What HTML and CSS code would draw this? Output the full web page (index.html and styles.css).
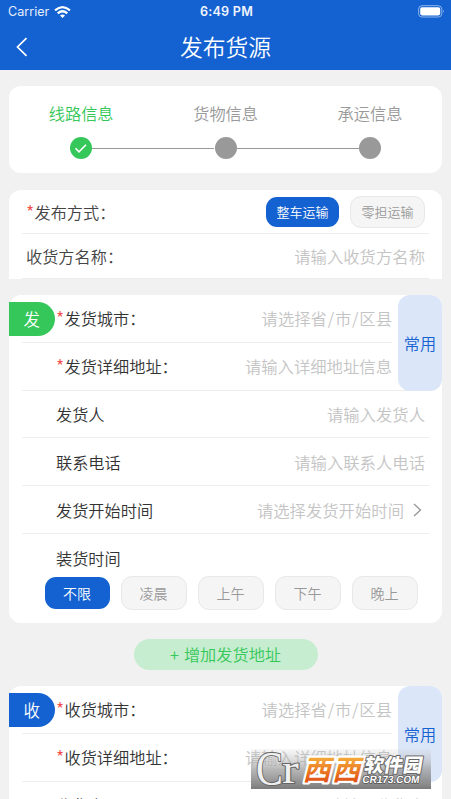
FILE: index.html
```html
<!DOCTYPE html>
<html lang="zh-CN">
<head>
<meta charset="utf-8">
<title>发布货源</title>
<link rel="stylesheet" href="styles.css">
</head>
<body>
<header class="header">
  <div class="status">
    <div class="carrier">Carrier
      <svg width="17" height="12" viewBox="0 0 17 12" fill="none" stroke="#fff" stroke-width="2.2"><path d="M1 4.4Q8.5-2.1 16 4.4M3.7 7.3Q8.5 3.2 13.3 7.3"/><path d="M6 9.4Q8.5 7.4 11 9.4L8.5 12Z" fill="#fff" stroke="none"/></svg>
    </div>
    <div class="time">6:49 PM</div>
    <svg class="battery" width="27" height="13" viewBox="0 0 27 13"><rect x=".6" y=".7" width="23.2" height="11.3" rx="3.4" fill="none" stroke="#8eb4ea" stroke-width="1"/><rect x="2.2" y="2.3" width="20" height="8.1" rx="1.8" fill="#fff"/><path d="M25 4.6Q26.6 6.4 25 8.2Z" fill="#8eb4ea"/></svg>
  </div>
  <div class="titlebar">
    <svg class="back" width="12" height="20" viewBox="0 0 12 20" fill="none" stroke="#fff" stroke-width="1.7"><path d="M10.5 1.2 1.5 10l9 8.8"/></svg>
    <h1>发布货源</h1>
  </div>
</header>

<main>
  <section class="card steps">
    <div class="step done"><span>线路信息</span><i class="dot"><svg width="14" height="11" viewBox="0 0 14 11" fill="none" stroke="#fff" stroke-width="1.6"><path d="M1.5 5.3 5 8.9l7-7.1"/></svg></i></div>
    <div class="step"><span>货物信息</span><i class="dot"></i></div>
    <div class="step"><span>承运信息</span><i class="dot"></i></div>
  </section>

  <section class="card basic">
    <div class="row"><label><b>*</b>发布方式：</label><div class="modes"><button class="chip on">整车运输</button><button class="chip">零担运输</button></div></div>
    <div class="row"><label>收货方名称：</label><span class="hint">请输入收货方名称</span></div>
  </section>

  <section class="card address">
    <div class="tag send">发</div>
    <div class="common">常用</div>
    <div class="row short"><label><b>*</b>发货城市：</label><span class="hint">请选择省<i>/</i>市<i>/</i>区县</span></div>
    <div class="row inset"><label><b>*</b>发货详细地址：</label><span class="hint">请输入详细地址信息</span></div>
    <div class="row"><label>发货人</label><span class="hint">请输入发货人</span></div>
    <div class="row"><label>联系电话</label><span class="hint">请输入联系人电话</span></div>
    <div class="row"><label>发货开始时间</label><span class="hint">请选择发货开始时间<svg class="next" width="9" height="14" viewBox="0 0 9 14" fill="none" stroke="#999" stroke-width="1.4"><path d="m1 1 6.5 6L1 13"/></svg></span></div>
    <div class="row last"><label>装货时间</label></div>
    <div class="periods"><button class="chip on">不限</button><button class="chip">凌晨</button><button class="chip">上午</button><button class="chip">下午</button><button class="chip">晚上</button></div>
  </section>

  <button class="add">+ 增加发货地址</button>

  <section class="card address receive-card">
    <div class="tag receive">收</div>
    <div class="common">常用</div>
    <div class="row short"><label><b>*</b>收货城市：</label><span class="hint">请选择省<i>/</i>市<i>/</i>区县</span></div>
    <div class="row inset"><label><b>*</b>收货详细地址：</label><span class="hint">请输入详细地址信息</span></div>
    <div class="row"><label>收货人</label><span class="hint">请输入收货人</span></div>
  </section>
</main>

<svg class="watermark" width="180" height="40" viewBox="0 0 180 40">
  <defs>
    <linearGradient id="shade" x2="0" y2="1"><stop stop-color="#ccc" stop-opacity=".15"/><stop offset=".5" stop-color="#999" stop-opacity=".7"/><stop offset="1" stop-color="#777" stop-opacity=".97"/></linearGradient>
    <linearGradient id="orange" x2="0" y2="1"><stop offset=".2" stop-color="#f7b23c"/><stop offset=".9" stop-color="#df4a12"/></linearGradient>
  </defs>
  <rect width="180" height="40" fill="url(#shade)"/>
  <g class="mark-letters">
    <text transform="translate(5 36) scale(.84 1)" font-size="48">C</text>
    <text transform="translate(31 33.5) scale(1.2 1)" font-size="42">r</text>
  </g>
  <g class="mark-outline">
    <text transform="translate(51.5 31) skewX(-14)" font-size="28">西</text>
    <text transform="translate(81 31) skewX(-14)" font-size="28">西</text>
  </g>
  <g class="mark-name">
    <text transform="translate(51.5 31) skewX(-14)" font-size="28">西</text>
    <text transform="translate(81 31) skewX(-14)" font-size="28">西</text>
  </g>
  <text class="mark-site" transform="translate(112.5 22.5) skewX(-10)" font-size="19" textLength="58" lengthAdjust="spacingAndGlyphs">软件园</text>
  <text class="mark-url" transform="translate(111 33.5) skewX(-8)" font-size="10.5" textLength="57" lengthAdjust="spacingAndGlyphs">CR173.COM</text>
</svg>
</body>
</html>
```
FILE: styles.css
```css
* { box-sizing: border-box; }
html, body { margin: 0; height: 799px; overflow: hidden; }
body { position: relative; width: 451px; background: #f1f1f1; color: #333; font: 350 16.2px/24px "Noto Sans CJK SC", sans-serif; }
button { border: 0; padding: 0; font: inherit; }

.header { height: 70px; background: #1462d1; color: #fff; }
.status { display: grid; grid-template-columns: 1fr auto 1fr; align-items: center; height: 24px; padding: 0 6px 0 8px; font: 400 12.6px/24px Inter, sans-serif; }
.carrier { display: flex; align-items: center; gap: 5px; color: #e4edfb; }
.time { font-weight: 600; letter-spacing: .25px; color: #eef4fd; }
.battery { justify-self: end; margin-top: -2px; }
.titlebar { display: grid; grid-template-columns: 1fr auto 1fr; align-items: center; height: 46px; padding: 2px 16px 0; }
.titlebar h1 { margin: -2px 0 0; font-size: 22.8px; font-weight: 350; line-height: 46px; }
.back { margin-top: -2px; }

main { display: flex; flex-direction: column; height: 729px; overflow: hidden; padding: 16px 9px 0; }
.card { flex: none; width: 433px; background: #fff; border-radius: 12px; }

.steps { display: grid; grid-template-columns: repeat(3, 144.4px); height: 87px; padding-top: 15px; }
.step { display: flex; flex-direction: column; align-items: center; gap: 12px; color: #999; position: relative; }
.step + .step::before { content: ""; position: absolute; top: 46.5px; left: -61px; width: 122px; height: 1px; background: #999; }
.dot { display: flex; align-items: center; justify-content: center; width: 22px; height: 22px; border-radius: 50%; background: #999; }
.done { color: #36c75a; }
.done .dot { background: #36c75a; }

.row { display: flex; align-items: center; justify-content: space-between; margin: 0 13px; padding-right: 4px; height: 47.8px; border-bottom: 1.5px solid #ededed; white-space: nowrap; }
.row b { display: inline-block; width: 8.5px; color: #f0504c; font-size: 18px; line-height: 20px; font-weight: 350; }
.hint { display: flex; align-items: center; color: #c4c4c4; font-size: 16.35px; }
.hint i { width: 8px; text-align: center; font-style: normal; }
.next { margin-left: 9px; margin-right: 3px; }

.basic { height: 89px; margin-top: 17px; border-radius: 12px 12px 0 0; }
.basic .row { height: 44.5px; padding-left: 4px; color: #444; }
.basic .row:first-child { height: 44px; }
.modes { display: flex; align-items: center; gap: 11px; }
.chip { border: 1px solid #e8e8e8; border-radius: 11px; background: #f5f5f5; color: #999; }
.chip.on { border: 0; background: #1462d1; color: #fff; }
.modes .chip { width: 75px; height: 32px; font-size: 13px; line-height: 28px; }
.modes .chip.on { width: 73px; height: 30px; }

.address { position: relative; height: 328px; margin-top: 16px; }
.address .row { padding-left: 34px; }
.address .short { margin-right: 50px; padding-right: 0; }
.address .inset { padding-right: 37px; }
.address .last { border-bottom: 0; height: 42px; padding-top: 7px; }
.tag { position: absolute; top: 7px; left: 0; width: 45.5px; height: 34px; border-radius: 0 17px 17px 0; color: #fff; font-size: 16.5px; line-height: 35px; text-align: center; }
.send { background: #36c75a; }
.receive { background: #1462d1; }
.common { position: absolute; top: 0; right: 0; display: flex; align-items: center; justify-content: center; width: 44px; height: 95.5px; border-radius: 12px; background: #dbe6f8; color: #1462d1; }
.periods { display: flex; align-items: center; gap: 11px; padding-left: 35.5px; }
.periods .chip { width: 66px; height: 34px; font-size: 14px; line-height: 30px; }
.periods .chip.on { width: 65px; height: 32px; }

.add { flex: none; align-self: center; width: 184px; height: 31px; margin-top: 16px; border-radius: 16px; background: #c6edcf; color: #36c75a; line-height: 29px; word-spacing: 1.5px; }

.watermark { position: absolute; left: 251px; top: 749px; }
.watermark text { paint-order: stroke; stroke-linejoin: round; }
.mark-letters { font-family: "Liberation Serif", serif; font-weight: 400; fill: #f0f0f0; stroke: #666; stroke-width: 2px; }
.mark-outline { font-family: "Noto Sans CJK SC", sans-serif; font-weight: 900; fill: #fff; stroke: #fff; stroke-width: 4px; }
.mark-name { font-family: "Noto Sans CJK SC", sans-serif; font-weight: 700; fill: url(#orange); }
.mark-site { font-family: "Noto Sans CJK SC", sans-serif; font-weight: 900; fill: #fff; stroke: #666; stroke-width: 2px; }
.mark-url { font-family: "Liberation Sans", sans-serif; font-weight: 700; fill: #fff; stroke: #555; stroke-width: 1.5px; }
```
